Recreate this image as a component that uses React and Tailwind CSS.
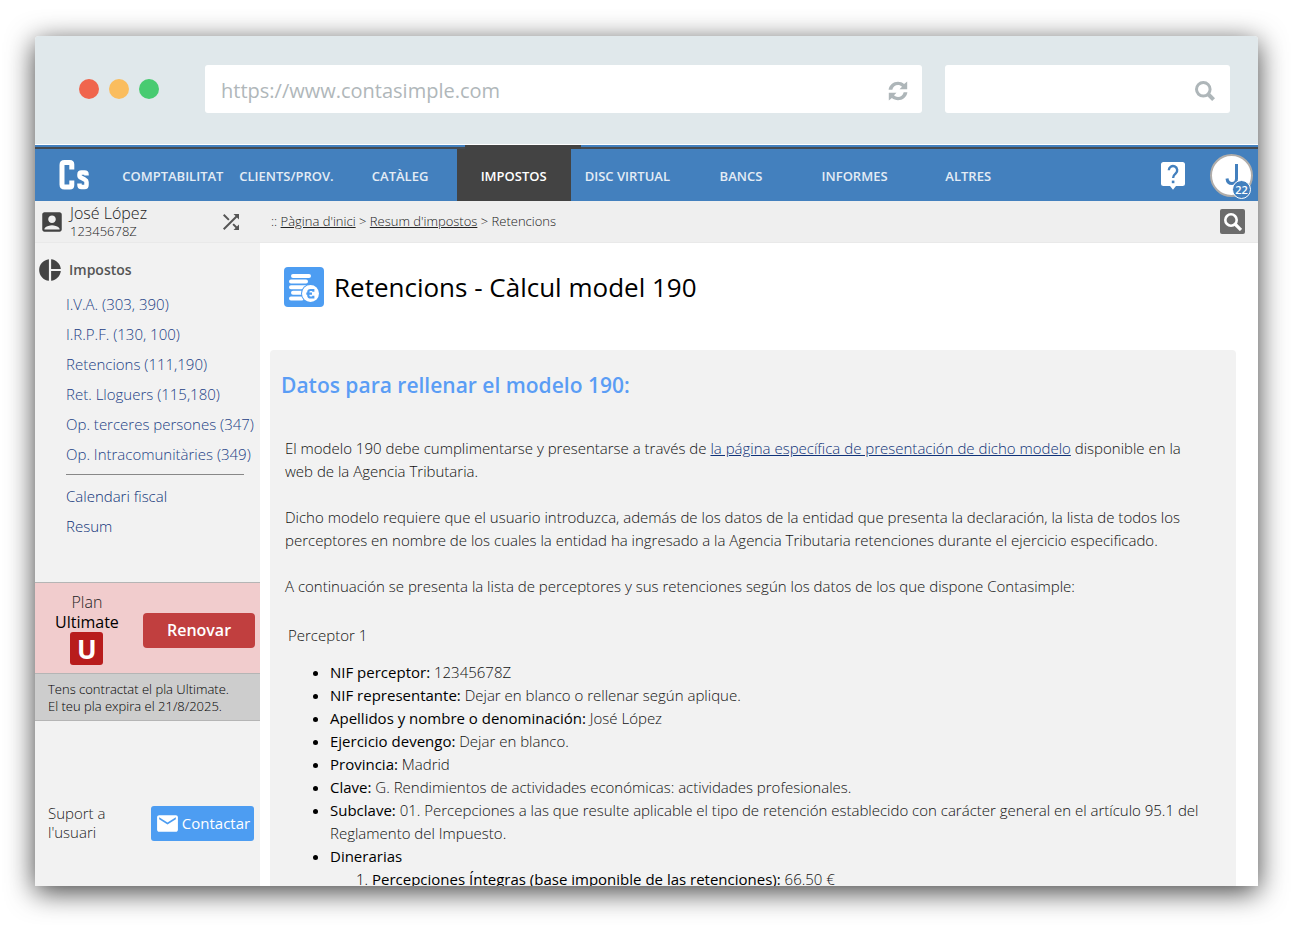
import { MdAccountBox, MdEmail, MdPieChart, MdShuffle } from "react-icons/md";

const tabs = ["COMPTABILITAT", "CLIENTS/PROV.", "CATÀLEG", "IMPOSTOS", "DISC VIRTUAL", "BANCS", "INFORMES", "ALTRES"];

const taxLinks = [
  "I.V.A. (303, 390)",
  "I.R.P.F. (130, 100)",
  "Retencions (111,190)",
  "Ret. Lloguers (115,180)",
  "Op. terceres persones (347)",
  "Op. Intracomunitàries (349)",
];

const fields = [
  ["NIF perceptor:", "12345678Z"],
  ["NIF representante:", "Dejar en blanco o rellenar según aplique."],
  ["Apellidos y nombre o denominación:", "José López"],
  ["Ejercicio devengo:", "Dejar en blanco."],
  ["Provincia:", "Madrid"],
  ["Clave:", "G. Rendimientos de actividades económicas: actividades profesionales."],
  [
    "Subclave:",
    "01. Percepciones a las que resulte aplicable el tipo de retención establecido con carácter general en el artículo 95.1 del Reglamento del Impuesto.",
  ],
];

function RefreshIcon() {
  return (
    <svg viewBox="0 0 20 20" className="size-5 shrink-0" fill="#aeb6b9" aria-hidden="true">
      <path d="M.6 8.800C1.200 4.200 5.200.8 10 .8c2.300 0 4.400.8 6.100 2.200L19.200.4V8.300h-7.700l2.500-2.600C12.800 4.500 11.500 4 10 4c-2.800 0-5 1.900-5.700 4.800z" />
      <path d="M19.400 11.200c-.6 4.600-4.600 8-9.400 8-2.300 0-4.400-.8-6.100-2.200L.8 19.600v-7.900h7.700L6 14.300c1.200 1.200 2.500 1.700 4 1.700 2.800 0 5-1.900 5.700-4.800z" />
    </svg>
  );
}

function LensIcon() {
  return (
    <svg viewBox="0 0 20 20" className="size-5 shrink-0" fill="none" stroke="#aeb6b9" aria-hidden="true">
      <circle cx="8.300" cy="8.300" r="6.800" strokeWidth="3" />
      <path d="M13 13l5.600 5.600" strokeWidth="4" />
    </svg>
  );
}

function Logo() {
  return (
    <svg viewBox="0 0 31 30" className="h-[30px] w-[31px]" fill="none" stroke="#fff" strokeWidth="5" aria-hidden="true">
      <path d="M12.800 9.500V4.500Q12.800 2.500 10.800 2.500H5.500Q3 2.500 3 5V24.500Q3 27 5.500 27H10.800Q12.800 27 12.800 25V20.500" />
      <path
        d="M27.500 15.500V14.500Q27.500 12.600 25.500 12.600H22.500Q20.500 12.600 20.500 14.500V15.500Q20.500 17 22 17.600L26 19.800Q27.500 20.500 27.500 22V25Q27.500 27 25.500 27H22.500Q20.500 27 20.500 25V23.500"
        strokeWidth="4.500"
      />
    </svg>
  );
}

function HelpIcon() {
  return (
    <svg viewBox="0 0 24 28" className="h-7 w-6" aria-hidden="true">
      <path d="M2.500 0h19A2.500 2.500 0 0 1 24 2.500v19a2.500 2.500 0 0 1-2.500 2.500H15l-3 3.800L9 24H2.500A2.500 2.500 0 0 1 0 21.500v-19A2.500 2.500 0 0 1 2.500 0z" fill="#fff" />
      <path d="M7.800 8.300a4.200 4.200 0 1 1 7 3.100c-1.500 1.300-2.700 2.300-2.700 4.600" fill="none" stroke="#4380be" strokeWidth="2.400" />
      <rect x="10.800" y="18.600" width="2.600" height="2.600" fill="#4380be" />
    </svg>
  );
}

function CoinsIcon() {
  return (
    <svg viewBox="0 0 40 40" className="size-10" aria-hidden="true">
      <rect width="40" height="40" rx="4" fill="#4d9df2" />
      <g stroke="#fff" strokeWidth="4" strokeLinecap="round">
        <path d="M9 9H25M7 14.600H22M7 20.200H22M9 25.800H18M7 31.600H18" />
      </g>
      <circle cx="26.500" cy="26.500" r="9.500" fill="#4d9df2" />
      <circle cx="26.500" cy="26.500" r="8.500" fill="#fff" />
      <path d="M29.300 24.800V23H26.500Q24.300 23 24.300 25V28.500Q24.300 30.500 26.500 30.500H29.300V28.700M22.300 26.700H28" fill="none" stroke="#4d9df2" strokeWidth="2.200" />
    </svg>
  );
}

function Chrome() {
  return (
    <div className="flex h-[109px] shrink-0 items-center border-b border-white bg-[#e0e8eb] pr-7 pb-[2px] pl-11">
      <div className="flex w-[126px] gap-[10px]">
        <span className="size-5 rounded-full bg-[#f0654d]" />
        <span className="size-5 rounded-full bg-[#fabd5e]" />
        <span className="size-5 rounded-full bg-[#48cb71]" />
      </div>
      <label className="flex h-12 flex-1 items-center rounded-[3px] bg-white pt-[3px] pr-[14px] pl-4">
        <span className="sr-only">Address</span>
        <input defaultValue="https://www.contasimple.com" className="h-full w-full bg-transparent text-[20px] text-[#b0b7ba] outline-none" />
        <RefreshIcon />
      </label>
      <label className="ml-[23px] flex h-12 w-[285px] items-center rounded-[3px] bg-white pt-[3px] pr-[15px] pl-4">
        <span className="sr-only">Search</span>
        <input className="h-full w-full min-w-0 bg-transparent text-[20px] text-[#b0b7ba] outline-none" />
        <LensIcon />
      </label>
    </div>
  );
}

function NavBar() {
  return (
    <header className="relative flex h-14 shrink-0 bg-[#4380be]">
      <div className="absolute inset-x-0 top-[2px] h-[2px] bg-[#444a51]" />
      <div className="absolute top-0 left-[430px] h-1 w-[116px] bg-[#434343]" />
      <a href="#inici" aria-label="Contasimple" className="flex w-[81px] items-center pt-1 pl-6">
        <Logo />
      </a>
      <nav className="grid flex-1 grid-cols-8 pt-1">
        {tabs.map((tab) => (
          <a
            key={tab}
            href="#tab"
            className={`flex items-center justify-center pt-1 text-[13px] font-semibold whitespace-nowrap ${
              tab === "IMPOSTOS" ? "bg-[#434343] text-white" : "text-[#e3ecf5]"
            }`}
          >
            {tab}
          </a>
        ))}
      </nav>
      <div className="flex w-[233px] items-center justify-end gap-[25px] pt-1 pr-[5px]">
        <button aria-label="Ajuda" className="pt-[2px]">
          <HelpIcon />
        </button>
        <button className="relative flex size-[43px] items-center justify-center rounded-full border-2 border-[#b0adaa] bg-white text-[#4380be]">
          <svg viewBox="0 0 14 22" className="h-[22px] w-[14px]" fill="none" stroke="currentColor" strokeWidth="3" aria-hidden="true">
            <path d="M11.500 0V14.500Q11.500 19.500 7 19.500T2 14.500" />
          </svg>
          <span className="absolute right-0 -bottom-1 flex size-[19px] items-center justify-center rounded-full border border-white bg-[#4380be] text-[11px] leading-none font-semibold text-white">
            22
          </span>
        </button>
      </div>
    </header>
  );
}

function SubBar() {
  return (
    <div className="flex h-[42px] shrink-0 items-center border-b border-[#e9e9e9] bg-[#efefef] font-light text-[#222]">
      <div className="flex w-[225px] items-center pr-[17px] pl-1">
        <MdAccountBox className="size-[26px] text-[#434343]" />
        <div className="flex-1 pl-[5px]">
          <p className="text-[16px] leading-[18px]">José López</p>
          <p className="text-[13px] leading-[18px]">12345678Z</p>
        </div>
        <button aria-label="Canviar">
          <MdShuffle className="size-6 text-[#555]" />
        </button>
      </div>
      <p className="flex-1 pl-[11px] text-[13px]">
        :: <a href="#inici" className="underline">Pàgina d'inici</a> &gt;{" "}
        <a href="#resum" className="underline">Resum d'impostos</a> &gt; Retencions
      </p>
      <button aria-label="Cercar" className="mr-[13px] flex size-[25px] items-center justify-center rounded-[2px] bg-[#6c6c6c]">
        <svg viewBox="0 0 18 18" className="size-[18px]" fill="none" stroke="#fff" aria-hidden="true">
          <circle cx="7" cy="7" r="5.700" strokeWidth="2.600" />
          <path d="M11 11l6 6" strokeWidth="3.200" />
        </svg>
      </button>
    </div>
  );
}

function Sidebar() {
  return (
    <aside className="w-[225px] shrink-0 bg-[#f2f2f2] text-[15px] font-light">
      <h2 className="flex items-center gap-[6px] pt-[14px] pl-[2px] text-[14px] leading-[26px] font-semibold text-[#555]">
        <MdPieChart className="size-[26px] text-[#434343]" />
        Impostos
      </h2>
      <ul className="pt-[6px] pl-[31px] leading-[30px] whitespace-nowrap text-[#1c3f85]">
        {taxLinks.map((link) => (
          <li key={link}>
            <a href="#impost">{link}</a>
          </li>
        ))}
      </ul>
      <hr className="mt-[5px] mr-4 mb-[6px] ml-[31px] border-[#888]" />
      <ul className="pl-[31px] leading-[30px] text-[#0f3278]">
        <li><a href="#calendari">Calendari fiscal</a></li>
        <li><a href="#resum">Resum</a></li>
      </ul>
      <section className="mt-[41px] border-y border-[#b5b5b5]">
        <div className="flex items-center justify-between bg-[#f1cccd] pt-[9px] pr-[5px] pb-2 pl-5">
          <div className="flex flex-col items-center text-[16px] leading-5">
            <span className="text-[#222]">Plan</span>
            <span className="font-normal text-black">Ultimate</span>
            <span className="flex size-[33px] items-center justify-center rounded-[3px] bg-[#b81c1c] text-[26px] font-bold text-white">U</span>
          </div>
          <button className="mt-[3px] h-[35px] w-28 rounded bg-[#c13f3f] text-[16px] font-semibold text-white">Renovar</button>
        </div>
        <p className="border-t border-[#b5b5b5] bg-[#cdcdcd] px-[13px] pt-[7px] pb-[5px] text-[13px] leading-[17px] text-black">
          Tens contractat el pla Ultimate.
          <br />
          El teu pla expira el 21/8/2025.
        </p>
      </section>
      <section className="flex items-center justify-between pt-[83px] pr-[6px] pl-[13px]">
        <p className="w-20 leading-[19px] text-[#222]">Suport a l'usuari</p>
        <button className="flex h-[35px] w-[103px] items-center justify-center gap-[2px] rounded-[3px] bg-[#4d9df2] font-normal text-white">
          <MdEmail className="size-[25px]" />
          Contactar
        </button>
      </section>
    </aside>
  );
}

function Content() {
  return (
    <main className="min-w-0 flex-1 pr-[22px] pl-[10px] text-[15px] leading-[23px] font-light text-[#111]">
      <div className="flex items-center gap-[10px] pt-6 pl-[14px]">
        <CoinsIcon />
        <h1 className="text-[26px] leading-9 font-normal text-black">Retencions - Càlcul model 190</h1>
      </div>
      <section className="mt-[43px] rounded bg-[#f2f2f2] px-[11px] pt-[19px] pb-10">
        <h2 className="text-[21px] leading-8 font-semibold text-[#5a9df5]">Datos para rellenar el modelo 190:</h2>
        <div className="flex flex-col gap-[23px] pt-9 pr-5 pl-1">
          <p>
            El modelo 190 debe cumplimentarse y presentarse a través de{" "}
            <a href="#aeat" className="text-[#0f3278] underline">la página específica de presentación de dicho modelo</a> disponible en la web de la
            Agencia Tributaria.
          </p>
          <p>
            Dicho modelo requiere que el usuario introduzca, además de los datos de la entidad que presenta la declaración, la lista de todos los
            perceptores en nombre de los cuales la entidad ha ingresado a la Agencia Tributaria retenciones durante el ejercicio especificado.
          </p>
          <p>A continuación se presenta la lista de perceptores y sus retenciones según los datos de los que dispone Contasimple:</p>
        </div>
        <h3 className="pt-[26px] pl-[7px]">Perceptor 1</h3>
        <ul className="list-disc pt-[14px] pr-2 pl-[49px] marker:text-black">
          {fields.map(([name, value]) => (
            <li key={name}>
              <strong className="font-normal text-black">{name}</strong> {value}
            </li>
          ))}
          <li>
            <strong className="font-normal text-black">Dinerarias</strong>
            <ol className="list-decimal pl-[42px] marker:text-[#444]">
              <li>
                <strong className="font-normal text-black">Percepciones Íntegras (base imponible de las retenciones):</strong> 66.50 €
              </li>
            </ol>
          </li>
        </ul>
      </section>
    </main>
  );
}

export default function App() {
  return (
    <div className="h-screen bg-white px-[35px] pt-9 pb-[43px] font-['Open_Sans',sans-serif]">
      <div className="flex h-full flex-col overflow-hidden rounded-t bg-white shadow-[0_6px_28px_rgba(0,0,0,0.75)]">
        <Chrome />
        <NavBar />
        <SubBar />
        <div className="flex min-h-0 flex-1 overflow-hidden">
          <Sidebar />
          <Content />
        </div>
      </div>
    </div>
  );
}
